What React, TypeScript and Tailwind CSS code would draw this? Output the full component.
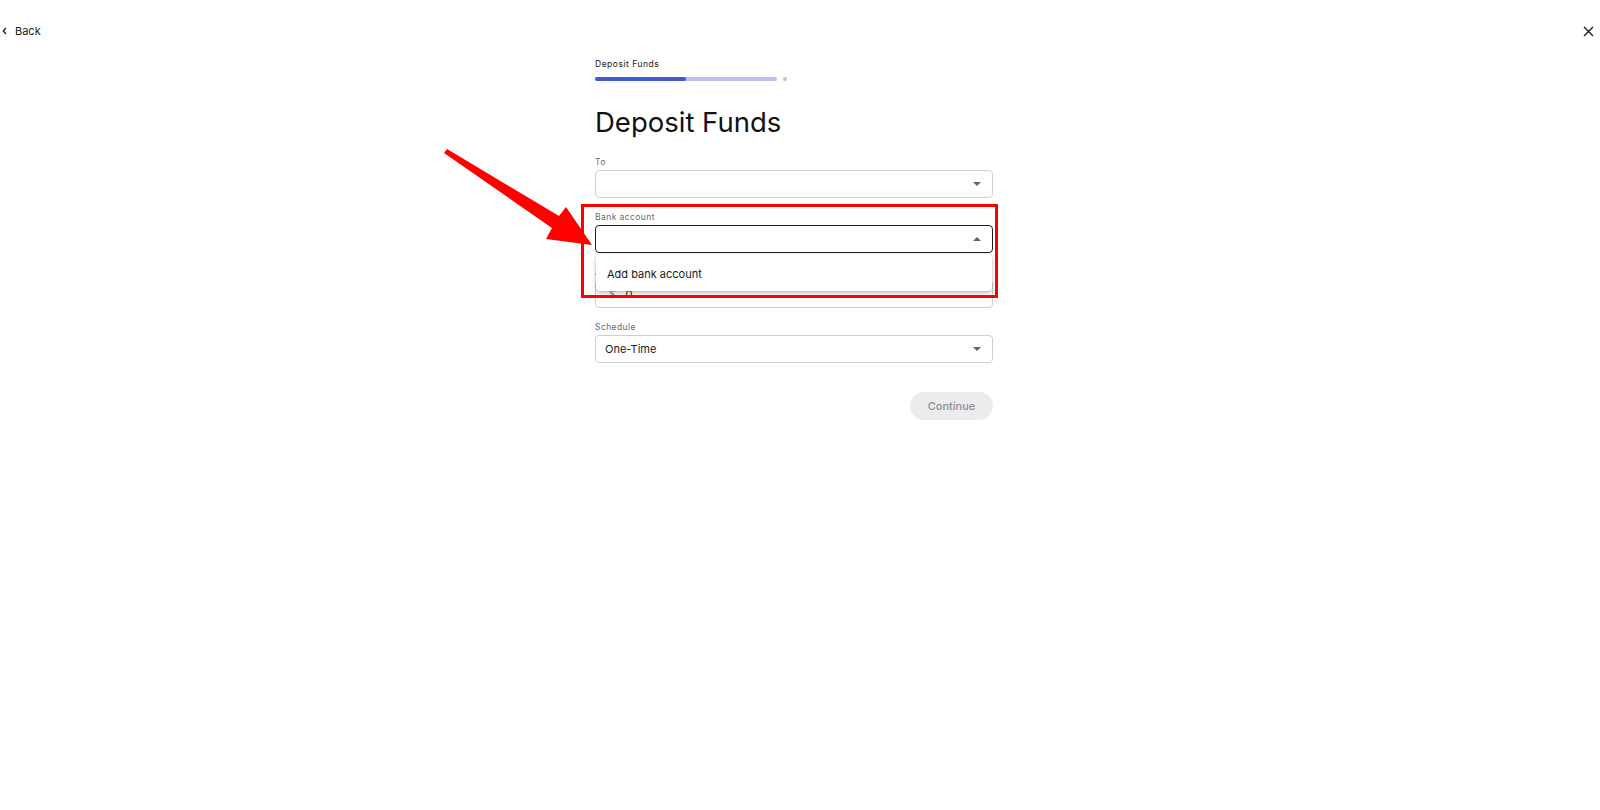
import { ReactNode } from 'react'

function Caret({ up = false }: { up?: boolean }) {
  return (
    <svg width="8" height="4" viewBox="0 0 8 4" className="shrink-0">
      {up ? <polygon points="0,4 8,4 4,0" fill="#5f6368" /> : <polygon points="0,0 8,0 4,4" fill="#5f6368" />}
    </svg>
  )
}

function Field({ label, children }: { label: string; children: ReactNode }) {
  return (
    <div className="flex flex-col">
      <div className="text-[8.5px] leading-[16px] tracking-[0.05em] text-[#6b6b6b]">{label}</div>
      {children}
    </div>
  )
}

export default function App() {
  return (
    <div className="relative w-full h-[810px] bg-white overflow-hidden" style={{ fontFamily: 'Inter, "Liberation Sans", sans-serif' }}>
      {/* Top bar */}
      <div className="flex items-center justify-between h-[18px] mt-[22px] pl-[2px] pr-[6px]">
        <button className="flex items-center gap-[8px] text-[11px] text-[#1a1a1a]">
          <svg width="5" height="8" viewBox="0 0 5 8">
            <path d="M4 1 L1.2 4 L4 7" fill="none" stroke="#1a1a1a" strokeWidth="1.2" />
          </svg>
          Back
        </button>
        <button className="w-[12px] h-[12px] flex items-center justify-center">
          <svg width="11" height="11" viewBox="0 0 11 11">
            <path d="M1 1 L10 10 M10 1 L1 10" stroke="#1a1a1a" strokeWidth="1.4" />
          </svg>
        </button>
      </div>

      {/* Form */}
      <div className="flex justify-center pr-[12px]">
        <div className="w-[398px] flex flex-col">
          <div className="mt-[19px] text-[8.5px] leading-[11px] tracking-[0.06em] text-[#1a1a1a]">Deposit Funds</div>
          <div className="mt-[7px] flex items-center gap-[6px]">
            <div className="w-[182px] h-[4px] rounded-full bg-[#b9c2ee] flex">
              <div className="w-[91px] h-[4px] rounded-full bg-[#4159d1]" />
            </div>
            <div className="w-[4px] h-[4px] rounded-full bg-[#b9c2ee]" />
          </div>
          <h1 className="mt-[24px] text-[27.5px] leading-[34px] text-[#111] font-normal">Deposit Funds</h1>

          <div className="mt-[15px] flex flex-col gap-[11px]">
            <Field label="To">
              <div className="h-[28px] border border-[#cfcfcf] rounded-[4px] flex items-center justify-end pr-[11px]">
                <Caret />
              </div>
            </Field>

            <Field label="Bank account">
              <div className="relative">
                <div className="h-[28px] border border-[#1f1f1f] rounded-[4px] flex items-center justify-end pr-[11px]">
                  <Caret up />
                </div>
                <div className="absolute z-20 left-[1px] right-[1px] top-[29px] h-[37px] bg-white rounded-[4px] shadow-[0_2px_4px_rgba(0,0,0,0.25),0_0_2px_rgba(0,0,0,0.12)] flex items-center pl-[11px] pt-[4px] text-[11px] text-[#1a1a1a]">
                  Add bank account
                </div>
              </div>
            </Field>

            <Field label="Amount">
              <div className="h-[28px] border border-[#cfcfcf] rounded-[4px] flex items-center pl-[13px] gap-[10px] text-[11px]">
                <span className="text-[#8a8a8a] text-[10px]">$</span>
                <span className="text-[#1a1a1a]">0</span>
              </div>
            </Field>

            <Field label="Schedule">
              <div className="h-[28px] border border-[#cfcfcf] rounded-[4px] flex items-center justify-between pl-[9px] pr-[11px] text-[11px] text-[#1a1a1a]">
                One-Time
                <Caret />
              </div>
            </Field>
          </div>

          <div className="mt-[29px] flex justify-end">
            <button className="w-[83px] h-[28px] rounded-full bg-[#ececee] text-[11px] font-medium text-[#8e8e93]">Continue</button>
          </div>
        </div>
      </div>

      {/* Annotation: red box + arrow */}
      <div className="absolute z-30 left-[581px] top-[204px] w-[417px] h-[94px] border-[3px] border-[#ff0000] pointer-events-none" />
      <svg className="absolute inset-0 z-30 pointer-events-none" width="1600" height="810" viewBox="0 0 1600 810">
        <polygon points="444,153 447,149 559,216 566,207 592,245 546,239 552,228" fill="#ff0000" />
      </svg>
    </div>
  )
}
